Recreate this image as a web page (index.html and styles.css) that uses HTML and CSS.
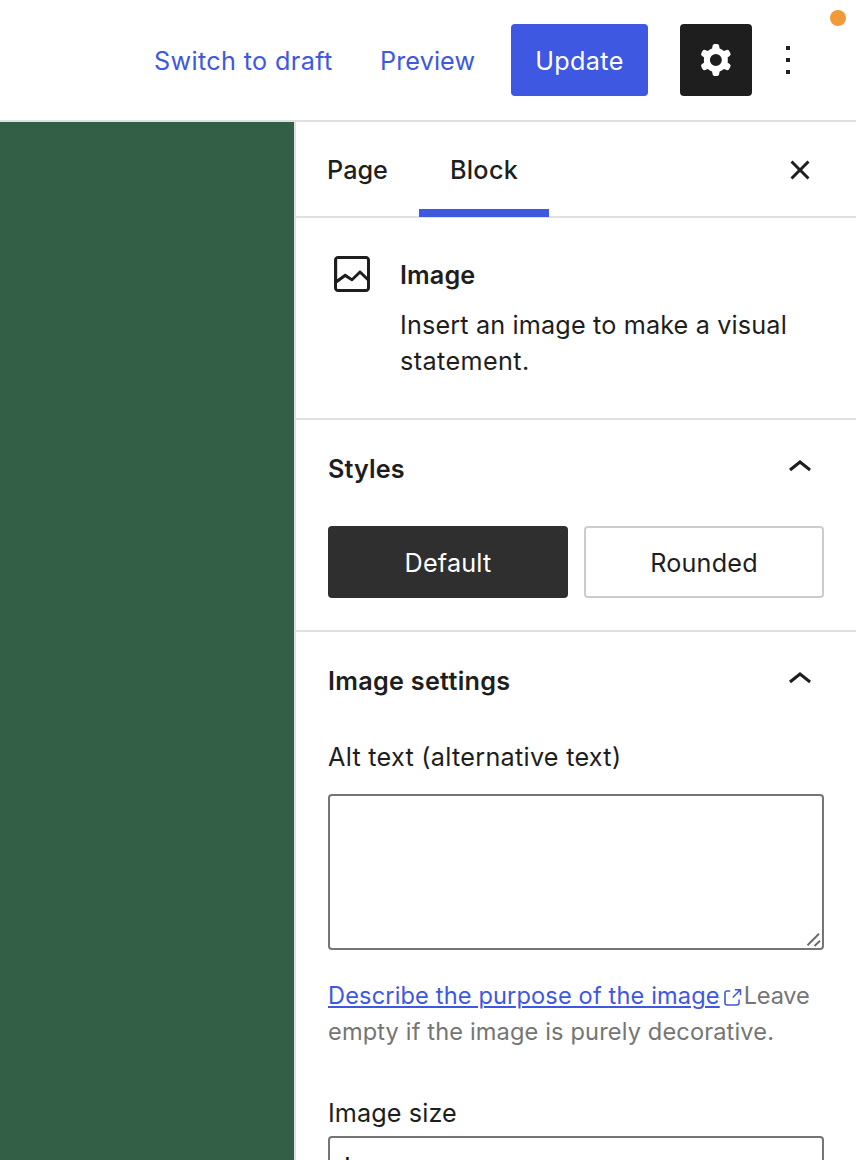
FILE: index.html
```html
<!DOCTYPE html>
<html lang="en">
<head>
<meta charset="utf-8">
<title>Edit Page</title>
<link rel="stylesheet" href="styles.css">
</head>
<body>
<div class="editor">
  <header class="topbar">
    <a class="link switch"><span>Switch to draft</span></a>
    <a class="link preview"><span>Preview</span></a>
    <button class="update"><span>Update</span></button>
    <button class="settings" aria-label="Settings"><svg class="icon" viewBox="0 0 24 24"><path fill-rule="evenodd" d="M10.289 4.836A1 1 0 0111.275 4h1.306a1 1 0 01.987.836l.244 1.466c.787.26 1.503.679 2.108 1.218l1.393-.522a1 1 0 011.216.437l.653 1.13a1 1 0 01-.23 1.273l-1.148.944a6.025 6.025 0 010 2.435l1.149.946a1 1 0 01.23 1.272l-.653 1.13a1 1 0 01-1.216.437l-1.394-.522c-.605.54-1.32.958-2.108 1.218l-.244 1.466a1 1 0 01-.987.836h-1.306a1 1 0 01-.986-.836l-.244-1.466a5.995 5.995 0 01-2.108-1.218l-1.394.522a1 1 0 01-1.217-.436l-.653-1.131a1 1 0 01.23-1.272l1.149-.946a6.026 6.026 0 010-2.435l-1.148-.944a1 1 0 01-.23-1.272l.653-1.131a1 1 0 011.217-.437l1.393.522a5.994 5.994 0 012.108-1.218l.244-1.466zM14.929 12a3 3 0 11-6 0 3 3 0 016 0z"/></svg></button>
    <svg class="icon more" viewBox="0 0 24 24"><path d="M13 19h-2v-2h2v2zm0-6h-2v-2h2v2zm0-6h-2V5h2v2z"/></svg>
    <span class="dot"></span>
  </header>
  <div class="body">
    <main class="canvas"></main>
    <aside class="sidebar">
      <nav class="tabs">
        <button class="tab tab-page"><span>Page</span></button>
        <button class="tab tab-block active"><span>Block</span></button>
        <svg class="icon close" viewBox="0 0 24 24"><path d="M12 13.06l3.712 3.713 1.061-1.06L13.061 12l3.712-3.712-1.06-1.06L12 10.938 8.288 7.227l-1.061 1.06L10.939 12l-3.712 3.712 1.06 1.061L12 13.061z"/></svg>
      </nav>
      <section class="card">
        <svg class="icon" viewBox="0 0 24 24"><path d="M19 3H5c-1.1 0-2 .9-2 2v14c0 1.1.9 2 2 2h14c1.1 0 2-.9 2-2V5c0-1.1-.9-2-2-2zM5 4.5h14c.3 0 .5.2.5.5v8.4l-3-2.9c-.3-.3-.8-.3-1 0L11.9 14 9 12c-.3-.2-.6-.2-.8 0l-3.6 2.6V5c-.1-.3.1-.5.4-.5zm14 15H5c-.3 0-.5-.2-.5-.5v-2.4l4.1-3 3 1.9c.3.2.7.2.9-.1L16 12l3.5 3.4V19c0 .3-.2.5-.5.5z"/></svg>
        <div class="card-text">
          <h2 class="title">Image</h2>
          <p class="desc">Insert an image to make a visual<br><span class="desc-end">statement.</span></p>
        </div>
      </section>
      <section class="panel styles">
        <div class="panel-head">
          <h2 class="title">Styles</h2>
          <svg class="icon" viewBox="0 0 24 24"><path d="M6.5 12.4L12 8l5.5 4.4-.9 1.2L12 10l-4.5 3.6-1-1.2z"/></svg>
        </div>
        <div class="variations">
          <button class="variation selected"><span>Default</span></button>
          <button class="variation"><span>Rounded</span></button>
        </div>
      </section>
      <section class="panel image-settings">
        <div class="panel-head">
          <h2 class="title">Image settings</h2>
          <svg class="icon" viewBox="0 0 24 24"><path d="M6.5 12.4L12 8l5.5 4.4-.9 1.2L12 10l-4.5 3.6-1-1.2z"/></svg>
        </div>
        <label class="label alt-label" for="alt">Alt text (alternative text)</label>
        <div class="field">
          <textarea id="alt"></textarea>
          <svg class="grip" viewBox="0 0 16 16"><path d="M1.5 13.2 13 1.7M8.5 14l5.5-5.2"/></svg>
        </div>
        <p class="help"><a class="help-link">Describe the purpose of the image</a><svg class="external" viewBox="0 0 24 24"><path d="M18.2 17c0 .7-.6 1.2-1.2 1.2H7c-.7 0-1.2-.6-1.2-1.2V7c0-.7.6-1.2 1.2-1.2h3.2V4.2H7C5.5 4.2 4.2 5.5 4.2 7v10c0 1.5 1.2 2.8 2.8 2.8h10c1.5 0 2.8-1.2 2.8-2.8v-3.6h-1.5V17zM14.9 3v1.5h3.7l-6.4 6.4 1.1 1.1 6.4-6.4v3.7h1.5V3h-6.3z"/></svg><span class="leave">Leave</span><br>empty if the image is purely decorative.</p>
        <div class="label size-label">Image size</div>
        <div class="select">Large</div>
      </section>
    </aside>
  </div>
</div>
</body>
</html>
```
FILE: styles.css
```css
* { box-sizing: border-box; }
body { margin: 0; background: #fff; }
h2, p { margin: 0; font-size: inherit; font-weight: inherit; }
button { margin: 0; padding: 0; border: 0; background: none; font: inherit; color: inherit; letter-spacing: inherit; }

.editor {
  display: flex;
  flex-direction: column;
  width: 856px;
  height: 1160px;
  overflow: hidden;
  font-family: Inter, "Liberation Sans", sans-serif;
  font-size: 25.2px;
  font-weight: 430;
  line-height: 36px;
  color: #1e1e1e;
  white-space: nowrap;
}
.icon { display: block; flex: none; width: 48px; height: 48px; fill: currentColor; }

.topbar {
  position: relative;
  display: flex;
  flex: none;
  align-items: center;
  height: 122px;
  padding-left: 154px;
  border-bottom: 2px solid #e0e0e0;
}
.link { padding-top: 2px; color: #3e58e1; }
.switch { width: 226px; letter-spacing: .36px; }
.preview { width: 131px; letter-spacing: .1px; }
.update { width: 137px; height: 72px; padding-top: 2px; border-radius: 4px; background: #3e58e1; color: #fff; letter-spacing: .35px; }
.settings {
  display: grid;
  place-items: center;
  width: 72px;
  height: 72px;
  margin-left: 32px;
  border-radius: 4px;
  background: #1e1e1e;
  color: #fff;
}
.more { margin-left: 12px; }
.dot { position: absolute; top: 10px; right: 10px; width: 16px; height: 16px; border-radius: 50%; background: #f19a37; }

.body { display: flex; flex: 1; min-height: 0; }
.canvas { width: 294px; background: #325f46; }
.sidebar { width: 562px; border-left: 2px solid #e0e0e0; }

.tabs { display: flex; align-items: center; height: 96px; border-bottom: 2px solid #e0e0e0; }
.tab { height: 95px; margin-bottom: -1px; font-weight: 500; }
.tab-page { width: 123px; }
.tab-block { width: 130px; letter-spacing: .3px; }
.active { box-shadow: inset 0 -8px #3e58e1; }
.close { margin: 2px 32px 0 auto; }

.card { display: flex; gap: 24px; height: 202px; padding: 32px 32px 0; border-bottom: 2px solid #e0e0e0; }
.card-text { padding-top: 7px; }
.title { font-weight: 600; letter-spacing: .1px; }
.image-settings .title { letter-spacing: .28px; }
.desc { margin-top: 14px; letter-spacing: .16px; }
.desc-end { letter-spacing: .4px; }

.panel { padding: 0 32px; }
.styles { height: 212px; border-bottom: 2px solid #e0e0e0; }
.panel-head { display: flex; justify-content: space-between; align-items: center; height: 96px; padding-top: 2px; }
.panel-head .icon { margin-top: -2px; }
.variations { display: grid; grid-template-columns: 1fr 1fr; gap: 16px; margin-top: 10px; }
.variation { height: 72px; padding-top: 2px; border-radius: 4px; box-shadow: inset 0 0 0 2px #ccc; letter-spacing: .2px; }
.selected { background: #2f2f2f; color: #fff; box-shadow: none; }

.label { display: block; margin-top: 11px; letter-spacing: .1px; }
.alt-label { letter-spacing: .28px; }
.field { position: relative; height: 156px; margin-top: 19px; }
textarea { display: block; width: 100%; height: 100%; margin: 0; border: 2px solid #757575; border-radius: 4px; background: #fff; resize: none; outline: 0; }
.grip { position: absolute; right: 2px; bottom: 2px; width: 16px; height: 16px; fill: none; stroke: #6c6c6c; stroke-width: 2; }
.help { margin-top: 28px; font-size: 23.6px; color: #757575; letter-spacing: .14px; }
.help-link { color: #3e58e1; text-decoration: underline; text-underline-offset: 2px; text-decoration-thickness: 1.5px; }
.external { width: 24px; height: 24px; vertical-align: -6px; fill: #3e58e1; }
.leave { letter-spacing: -.2px; }
.size-label { margin-top: 45px; }
.select { height: 60px; margin-top: 5px; padding: 11px 14px; border: 2px solid #757575; border-radius: 4px; color: #000; }
```
